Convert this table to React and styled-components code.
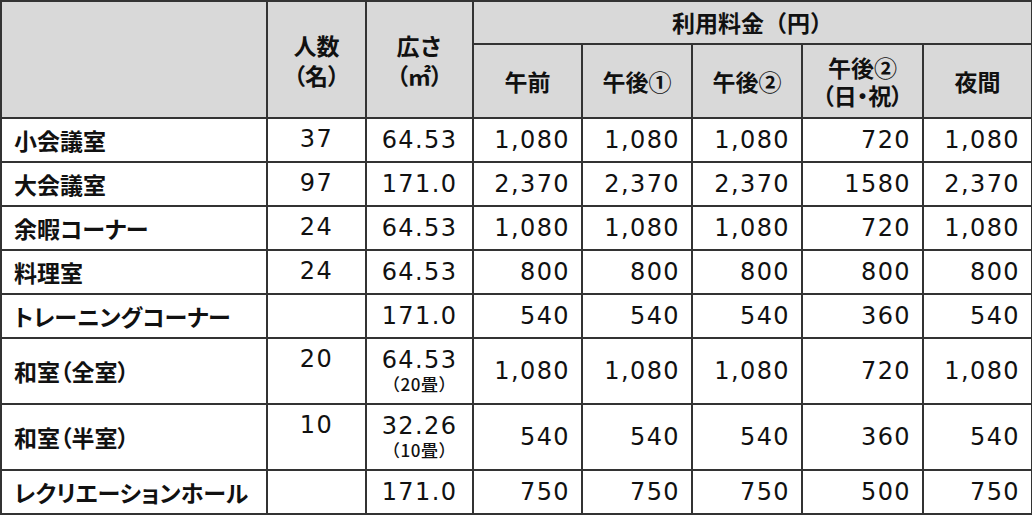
import React from "react";
import styled, { createGlobalStyle } from "styled-components";

const GlobalStyle = createGlobalStyle`
  html, body {
    margin: 0;
    padding: 0;
    background: #ffffff;
  }
  body {
    font-family: "Noto Sans CJK JP", "Noto Sans", sans-serif;
    color: #111111;
  }
`;

const Table = styled.table`
  width: 1031px;
  table-layout: fixed;
  border-collapse: collapse;
  border: 2px solid #4a4a4a;
`;

const Col = styled.col`
  width: ${(p) => p.$w}px;
`;

const HeadCell = styled.th`
  background: #d9d9d9;
  border: 2px solid #333333;
  font-weight: 700;
  font-size: 23px;
  line-height: ${(p) => p.$lh || 29}px;
  height: ${(p) => p.$h || 72}px;
  text-align: center;
  vertical-align: middle;
  padding: 0;
`;

const Line = styled.span`
  display: block;
  font-feature-settings: ${(p) => (p.$palt ? '"palt"' : "normal")};
`;

const Cell = styled.td`
  border: 2px solid #333333;
  height: ${(p) => (p.$tall ? 64 : 42)}px;
  padding: 0;
`;

const NameCell = styled(Cell)`
  font-weight: 700;
  font-size: 23px;
  line-height: 28px;
  padding-left: 12px;
  vertical-align: middle;
  white-space: nowrap;
  font-feature-settings: "palt";
`;

const Num = styled(Cell)`
  font-family: "DejaVu Sans", "Noto Sans", sans-serif;
  font-size: 24px;
  letter-spacing: 1.4px;
  line-height: 26px;
`;

const CountCell = styled(Num)`
  text-align: center;
  vertical-align: top;
  padding-top: 7px;
  height: ${(p) => (p.$tall ? 57 : 35)}px;
`;

const AreaCell = styled(Num)`
  text-align: center;
  vertical-align: middle;
`;

const Note = styled.span`
  display: block;
  font-family: "Noto Sans CJK JP", sans-serif;
  font-size: 17px;
  font-weight: 500;
  line-height: 22px;
  letter-spacing: 0.5px;
`;

const FeeCell = styled(Num)`
  text-align: right;
  vertical-align: middle;
  padding-right: 11px;
`;

const widths = [266, 99, 107, 109, 110, 110, 121, 109];

const slots = [["午前"], ["午後①"], ["午後②"], ["午後②", "（日・祝）"], ["夜間"]];

const rows = [
  { name: "小会議室", count: "37", area: "64.53", fees: ["1,080", "1,080", "1,080", "720", "1,080"] },
  { name: "大会議室", count: "97", area: "171.0", fees: ["2,370", "2,370", "2,370", "1580", "2,370"] },
  { name: "余暇コーナー", count: "24", area: "64.53", fees: ["1,080", "1,080", "1,080", "720", "1,080"] },
  { name: "料理室", count: "24", area: "64.53", fees: ["800", "800", "800", "800", "800"] },
  { name: "トレーニングコーナー", count: "", area: "171.0", fees: ["540", "540", "540", "360", "540"] },
  { name: "和室（全室）", count: "20", area: "64.53", note: "（20畳）", fees: ["1,080", "1,080", "1,080", "720", "1,080"] },
  { name: "和室（半室）", count: "10", area: "32.26", note: "（10畳）", fees: ["540", "540", "540", "360", "540"] },
  { name: "レクリエーションホール", count: "", area: "171.0", fees: ["750", "750", "750", "500", "750"] },
];

export default function App() {
  return (
    <>
      <GlobalStyle />
      <Table>
        <colgroup>
          {widths.map((w, i) => (
            <Col key={i} $w={w} />
          ))}
        </colgroup>
        <thead>
          <tr>
            <HeadCell rowSpan={2} />
            <HeadCell rowSpan={2} $lh={30}>
              <Line>人数</Line>
              <Line $palt>（名）</Line>
            </HeadCell>
            <HeadCell rowSpan={2} $lh={30}>
              <Line>広さ</Line>
              <Line $palt>（㎡）</Line>
            </HeadCell>
            <HeadCell colSpan={5} $h={41}>
              利用料金（円）
            </HeadCell>
          </tr>
          <tr>
            {slots.map((lines, i) => (
              <HeadCell key={i} $lh={28}>
                {lines.map((t, j) => (
                  <Line key={j} $palt={j > 0}>
                    {t}
                  </Line>
                ))}
              </HeadCell>
            ))}
          </tr>
        </thead>
        <tbody>
          {rows.map((r) => {
            const tall = Boolean(r.note);
            return (
              <tr key={r.name}>
                <NameCell $tall={tall}>{r.name}</NameCell>
                <CountCell $tall={tall}>{r.count}</CountCell>
                <AreaCell $tall={tall}>
                  {r.area}
                  {r.note && <Note>{r.note}</Note>}
                </AreaCell>
                {r.fees.map((f, i) => (
                  <FeeCell key={i} $tall={tall}>
                    {f}
                  </FeeCell>
                ))}
              </tr>
            );
          })}
        </tbody>
      </Table>
    </>
  );
}
